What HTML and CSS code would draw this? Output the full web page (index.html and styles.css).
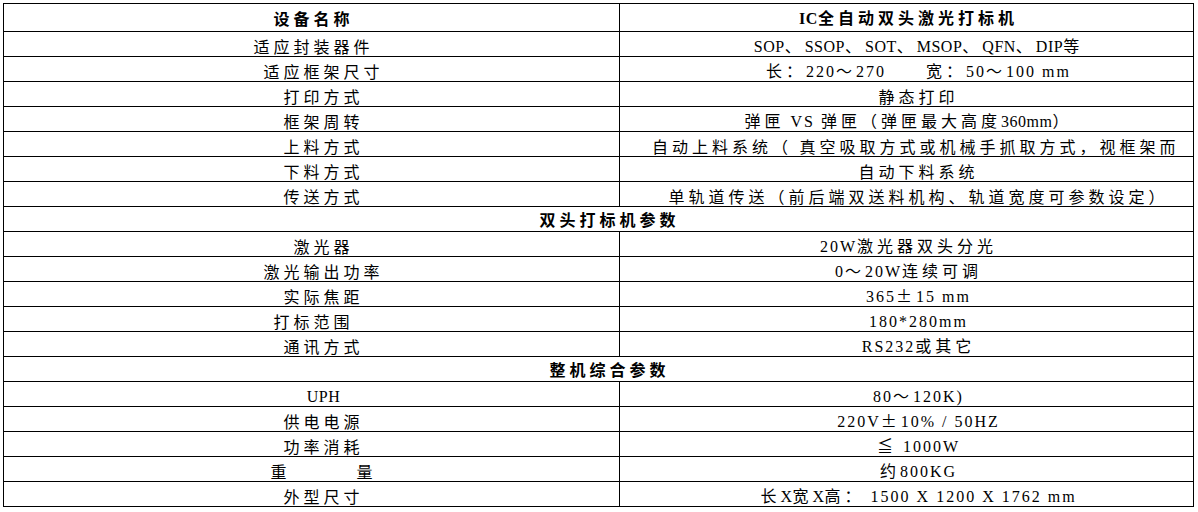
FILE: index.html
```html
<!DOCTYPE html>
<html lang="zh-CN">
<head>
<meta charset="utf-8">
<title>IC全自动双头激光打标机</title>
<link rel="stylesheet" href="styles.css">
</head>
<body>
<table class="sheet">
  <colgroup><col class="c1"><col class="c2"></colgroup>
  <tr class="head"><td>设备名称</td><td><span class="l b">IC</span>全自动双头激光打标机</td></tr>
  <tr><td>适应封装器件</td><td class="s"><span class="l">SOP</span>、<span class="l">SSOP</span>、<span class="l">SOT</span>、<span class="l">MSOP</span>、<span class="l">QFN</span>、<span class="l">DIP</span>等</td></tr>
  <tr><td class="s">适应框架尺寸</td><td class="s">长：<span class="l n">220</span>～<span class="l n">270</span><span class="gap"></span>宽：<span class="l n">50</span>～<span class="l n">100 mm</span></td></tr>
  <tr><td class="s">打印方式</td><td class="s">静态打印</td></tr>
  <tr><td class="s">框架周转</td><td>弹匣<span class="l n"> VS </span>弹匣（弹匣最大高度<span class="l">360mm</span>）</td></tr>
  <tr><td class="s">上料方式</td><td class="clip">自动上料系统（ 真空吸取方式或机械手抓取方式，视框架而</td></tr>
  <tr><td class="s">下料方式</td><td class="s">自动下料系统</td></tr>
  <tr><td class="s">传送方式</td><td class="s">单轨道传送（前后端双送料机构、轨道宽度可参数设定）</td></tr>
  <tr class="sec"><td colspan="2">双头打标机参数</td></tr>
  <tr><td class="s">激光器</td><td><span class="l n">20W</span>激光器双头分光</td></tr>
  <tr><td class="s">激光输出功率</td><td><span class="l n">0</span>～<span class="l n">20W</span>连续可调</td></tr>
  <tr><td class="s">实际焦距</td><td class="s"><span class="l n">365</span>±<span class="l n">15 mm</span></td></tr>
  <tr><td>打标范围</td><td class="s"><span class="l n">180*280mm</span></td></tr>
  <tr><td class="s">通讯方式</td><td class="s"><span class="l n">RS232</span>或其它</td></tr>
  <tr class="sec"><td colspan="2">整机综合参数</td></tr>
  <tr><td class="s"><span class="l">UPH</span></td><td class="s"><span class="l n">80</span>～<span class="l n">120K)</span></td></tr>
  <tr><td class="s">供电电源</td><td class="s"><span class="l n">220V</span>±<span class="l n">10% / 50HZ</span></td></tr>
  <tr><td class="s">功率消耗</td><td class="s">≦<span class="l n"> 1000W</span></td></tr>
  <tr><td class="s">重<span class="wgap"></span>量</td><td class="s">约<span class="l n">800KG</span></td></tr>
  <tr><td class="s">外型尺寸</td><td class="s">长<span class="l">X</span>宽<span class="l">X</span>高：<span class="l n"> 1500 X 1200 X 1762 mm</span></td></tr>
</table>
</body>
</html>
```

FILE: styles.css
```css
html, body {
  margin: 0;
  padding: 0;
  background: #ffffff;
}

.sheet {
  margin: 3px 0 0 3px;
  width: 1191px;
  border-collapse: collapse;
  table-layout: fixed;
  font-family: "Noto Sans CJK SC", "Noto Sans", sans-serif;
  font-size: 16px;
  letter-spacing: 4px;
  color: #000000;
}

.c1 {
  width: 616px;
}

.sheet td {
  border: 1px solid #000000;
  height: 23px;
  padding: 0 0 1px 4px;
  line-height: 18px;
  text-align: center;
  vertical-align: bottom;
  white-space: pre;
  overflow: hidden;
}

.sheet td.s {
  padding-left: 24px;
}

.head td,
.sec td {
  font-weight: bold;
}

.head td {
  height: 23px;
  padding-bottom: 4px;
}

.sec td {
  height: 21px;
  padding-bottom: 3px;
  padding-left: 22px;
}

.l {
  font-family: "Liberation Serif", serif;
  font-size: 16px;
  line-height: 16px;
  letter-spacing: 0.5px;
}

.n {
  letter-spacing: 2px;
}

.b {
  font-weight: bold;
}

.gap {
  display: inline-block;
  width: 40px;
}

.wgap {
  display: inline-block;
  width: 66px;
}

.sheet td.clip {
  text-align: left;
  padding-left: 32px;
}
```
